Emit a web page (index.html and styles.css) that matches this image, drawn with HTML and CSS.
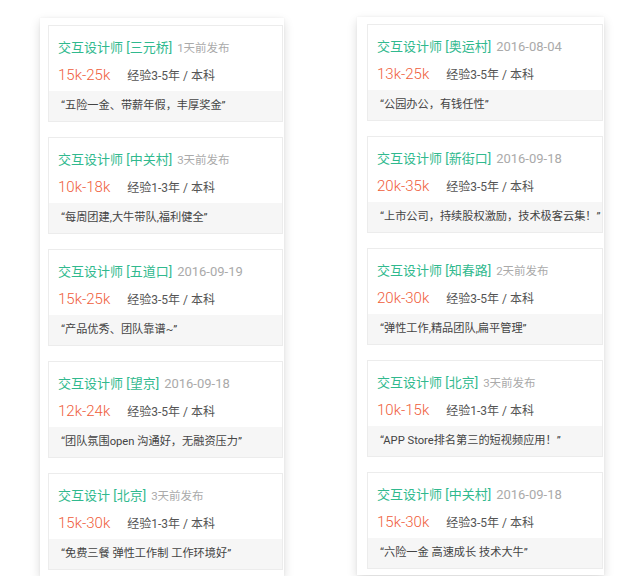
FILE: index.html
```html
<!DOCTYPE html>
<html lang="zh-CN">
<head>
<meta charset="utf-8">
<title>职位列表</title>
<link rel="stylesheet" href="styles.css">
</head>
<body>
<div class="stage">
  <div class="panel panel-left">
    <div class="card">
      <div class="title"><span class="job">交互设计师 [三元桥]</span><span class="ago">1天前发布</span></div>
      <div class="meta"><span class="salary">15k-25k</span><span class="exp">经验3-5年 / 本科</span></div>
      <div class="quote">“五险一金、带薪年假，丰厚奖金”</div>
    </div>
    <div class="card">
      <div class="title"><span class="job">交互设计师 [中关村]</span><span class="ago">3天前发布</span></div>
      <div class="meta"><span class="salary">10k-18k</span><span class="exp">经验1-3年 / 本科</span></div>
      <div class="quote">“每周团建,大牛带队,福利健全”</div>
    </div>
    <div class="card">
      <div class="title"><span class="job">交互设计师 [五道口]</span><span class="date">2016-09-19</span></div>
      <div class="meta"><span class="salary">15k-25k</span><span class="exp">经验3-5年 / 本科</span></div>
      <div class="quote">“产品优秀、团队靠谱~”</div>
    </div>
    <div class="card">
      <div class="title"><span class="job">交互设计师 [望京]</span><span class="date">2016-09-18</span></div>
      <div class="meta"><span class="salary">12k-24k</span><span class="exp">经验3-5年 / 本科</span></div>
      <div class="quote">“团队氛围open 沟通好，无融资压力”</div>
    </div>
    <div class="card">
      <div class="title"><span class="job">交互设计 [北京]</span><span class="ago">3天前发布</span></div>
      <div class="meta"><span class="salary">15k-30k</span><span class="exp">经验1-3年 / 本科</span></div>
      <div class="quote">“免费三餐 弹性工作制 工作环境好”</div>
    </div>
  </div>
  <div class="panel panel-right">
    <div class="card">
      <div class="title"><span class="job">交互设计师 [奥运村]</span><span class="date">2016-08-04</span></div>
      <div class="meta"><span class="salary">13k-25k</span><span class="exp">经验3-5年 / 本科</span></div>
      <div class="quote">“公园办公，有钱任性”</div>
    </div>
    <div class="card">
      <div class="title"><span class="job">交互设计师 [新街口]</span><span class="date">2016-09-18</span></div>
      <div class="meta"><span class="salary">20k-35k</span><span class="exp">经验3-5年 / 本科</span></div>
      <div class="quote">“上市公司，持续股权激励，技术极客云集！”</div>
    </div>
    <div class="card">
      <div class="title"><span class="job">交互设计师 [知春路]</span><span class="ago">2天前发布</span></div>
      <div class="meta"><span class="salary">20k-30k</span><span class="exp">经验3-5年 / 本科</span></div>
      <div class="quote">“弹性工作,精品团队,扁平管理”</div>
    </div>
    <div class="card">
      <div class="title"><span class="job">交互设计师 [北京]</span><span class="ago">3天前发布</span></div>
      <div class="meta"><span class="salary">10k-15k</span><span class="exp">经验1-3年 / 本科</span></div>
      <div class="quote">“APP Store排名第三的短视频应用！”</div>
    </div>
    <div class="card">
      <div class="title"><span class="job">交互设计师 [中关村]</span><span class="date">2016-09-18</span></div>
      <div class="meta"><span class="salary">15k-30k</span><span class="exp">经验3-5年 / 本科</span></div>
      <div class="quote">“六险一金 高速成长 技术大牛”</div>
    </div>
  </div>
</div>
</body>
</html>
```

FILE: styles.css
```css
html, body {
  margin: 0;
  padding: 0;
  background: #ffffff;
}

body {
  font-family: Roboto, "Noto Sans CJK SC", sans-serif;
  color: #555;
}

.stage {
  display: flex;
  align-items: flex-start;
  gap: 73px;
  padding: 18px 0 0 40px;
}

.panel {
  display: flex;
  flex-direction: column;
  gap: 15px;
  background: #fff;
  padding: 7px 1px 6px 8px;
  box-shadow: 0 4px 10px rgba(0, 0, 0, 0.14), 0 0 2px rgba(0, 0, 0, 0.06);
}

.panel-left {
  width: 235px;
}

.panel-right {
  width: 236px;
  padding-left: 10px;
  margin-top: -1px;
}

.card {
  border: 1px solid #ececec;
  background: #fff;
  padding-top: 12px;
  overflow: hidden;
}

.title {
  height: 18px;
  line-height: 18px;
  padding-left: 9px;
  white-space: nowrap;
}

.job {
  font-size: 13px;
  color: #30b98e;
}

.ago {
  font-size: 11.5px;
  color: #aaaaaa;
  margin-left: 5px;
}

.date {
  font-size: 13px;
  color: #aaaaaa;
  margin-left: 5px;
}

.meta {
  margin-top: 9px;
  height: 20px;
  line-height: 20px;
  padding-left: 9px;
  white-space: nowrap;
}

.salary {
  font-size: 15px;
  font-weight: 300;
  color: #ef5d3b;
}

.exp {
  font-size: 12px;
  color: #555;
  margin-left: 17px;
}

.quote {
  margin-top: 6px;
  height: 30px;
  line-height: 30px;
  background: #f6f6f6;
  padding-left: 12px;
  font-size: 11.2px;
  color: #444;
  white-space: nowrap;
  overflow: hidden;
}
```
